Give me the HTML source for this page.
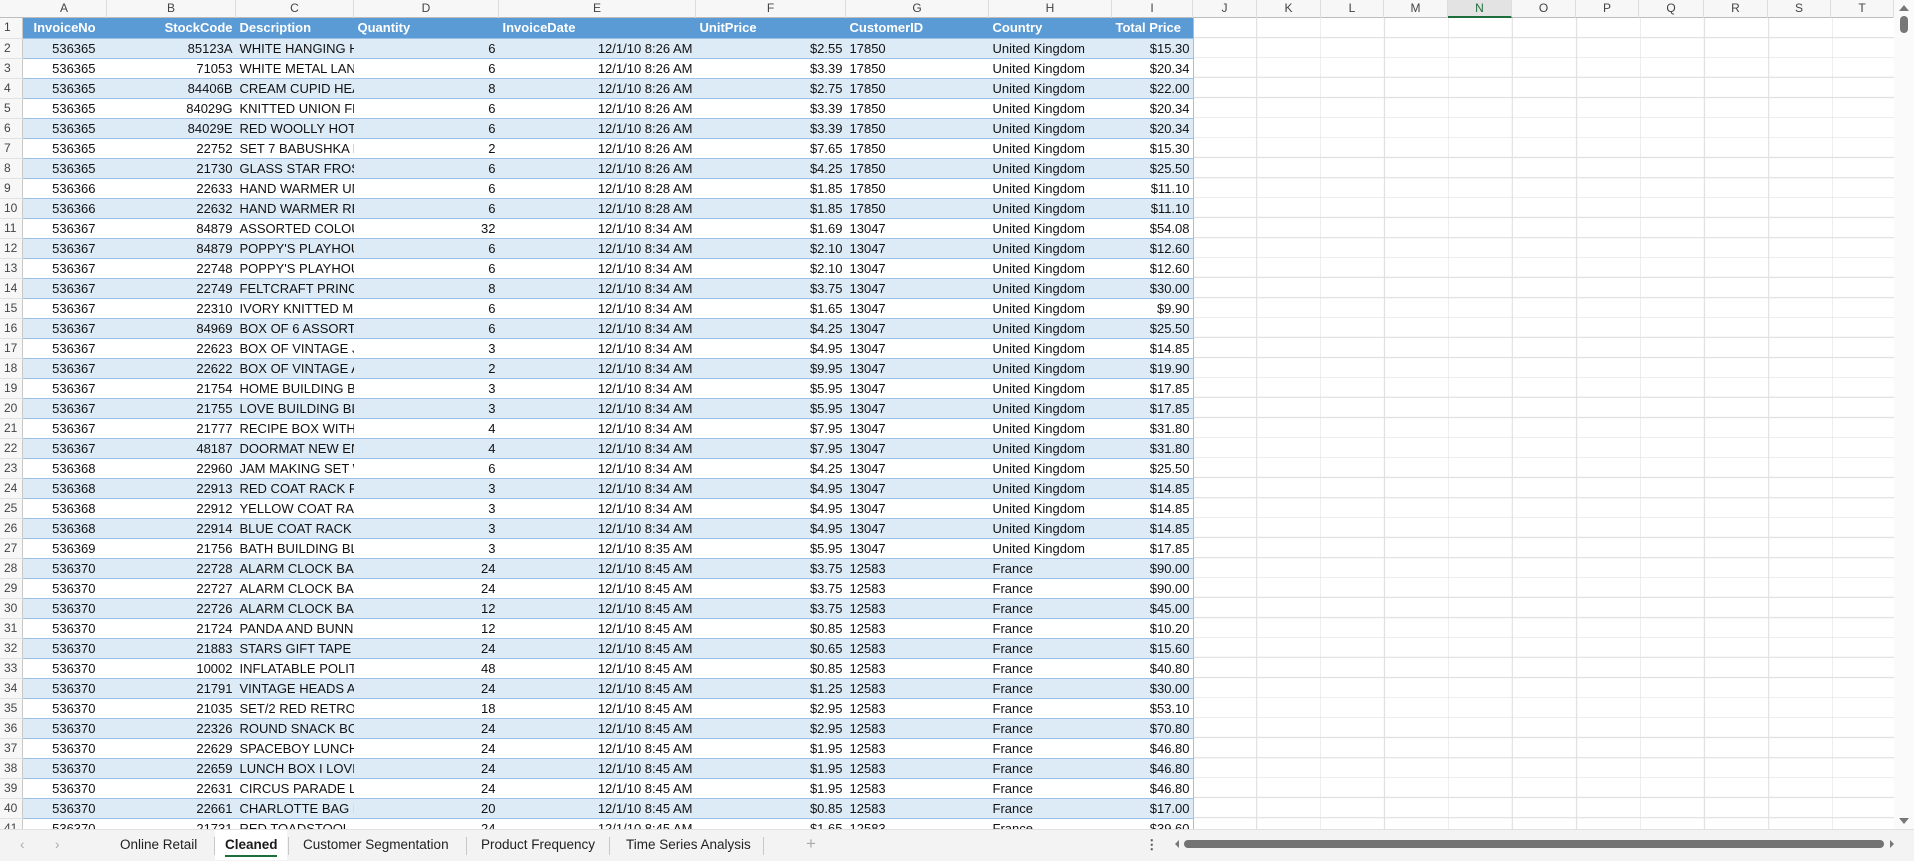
<!DOCTYPE html>
<html><head><meta charset="utf-8">
<style>
*{box-sizing:border-box;margin:0;padding:0}
body{width:1914px;height:861px;overflow:hidden;background:#fff;font-family:"Liberation Sans",Arial,sans-serif;font-size:13px;color:#111;position:relative}
#grid{position:absolute;left:0;top:0;width:1894px;height:829px;overflow:hidden;
background-image:repeating-linear-gradient(to bottom,transparent 0 19px,#e1e1e1 19px 20px),
repeating-linear-gradient(to right,transparent 0 63px,#e1e1e1 63px 64px);background-position:0 18px,1193px 0}
#colhdr{position:absolute;left:0;top:0;height:18px;width:1894px;background:#f7f7f7;border-bottom:1px solid #bdbdbd}
#colhdr div{position:absolute;top:0;height:18px;line-height:17px;text-align:center;color:#444;font-size:12px;border-right:1px solid #ddd}
table{position:absolute;left:0;top:18px;border-collapse:collapse;table-layout:fixed;width:1193px}
td{height:20px;padding:0 3px;white-space:nowrap;overflow:hidden;background:#fff;border-bottom:1px solid #9bc2e6;border-right:1px solid #fff;line-height:19px;font-size:13px}
td.r{text-align:right}td.c{text-align:right;padding-right:11px}
td.n{background:#f7f7f7;color:#444;text-align:left;padding-left:4px;border-bottom:1px solid #e1e1e1;border-right:1px solid #c8c8c8;font-size:12px}
tr.h td{background:#5b9bd5;color:#fff;font-weight:bold;border-right-color:#5b9bd5}
tr.h td.n{background:#f7f7f7;color:#444;font-weight:normal;border-right-color:#c8c8c8}
tr.b td{background:#ddebf7;border-right-color:#ddebf7}
tr.b td.n{background:#f7f7f7;border-right-color:#c8c8c8}
td.g{border-right:1px solid #e4e4e4!important}
td.last{border-right:1px solid #9bc2e6!important}
#vs{position:absolute;left:1894px;top:0;width:20px;height:829px;background:#fafafa}
#tabs{position:absolute;left:0;top:829px;width:1914px;height:32px;background:#f3f3f3;border-top:1px solid #e0e0e0;font-size:13.5px;color:#222}
#tabs span{position:absolute;top:7px}
.sep{position:absolute;top:7px;width:1px;height:18px;background:#c8c8c8}
</style></head><body>
<div id="grid"></div>
<div id="colhdr">
<div style="left:22px;width:85px">A</div><div style="left:107px;width:129px">B</div><div style="left:236px;width:118px">C</div><div style="left:354px;width:145px">D</div><div style="left:499px;width:197px">E</div><div style="left:696px;width:150px">F</div><div style="left:846px;width:143px">G</div><div style="left:989px;width:123px">H</div><div style="left:1112px;width:81px">I</div><div style="left:1193px;width:64px">J</div><div style="left:1257px;width:64px">K</div><div style="left:1321px;width:63px">L</div><div style="left:1384px;width:64px">M</div><div style="left:1448px;width:64px;background:#e3e3e3;color:#1e6e3c;border-bottom:2px solid #1e6e3c">N</div><div style="left:1512px;width:64px">O</div><div style="left:1576px;width:63px">P</div><div style="left:1639px;width:65px">Q</div><div style="left:1704px;width:64px">R</div><div style="left:1768px;width:63px">S</div><div style="left:1831px;width:63px">T</div>
</div>
<table>
<colgroup><col style="width:22px"><col style="width:85px"><col style="width:129px"><col style="width:118px"><col style="width:145px"><col style="width:197px"><col style="width:150px"><col style="width:143px"><col style="width:123px"><col style="width:81px"></colgroup>
<tr class="h"><td class="n">1</td><td style="padding-left:11px">InvoiceNo</td><td class="r">StockCode</td><td>Description</td><td>Quantity</td><td>InvoiceDate</td><td>UnitPrice</td><td>CustomerID</td><td>Country</td><td class="last">Total Price</td></tr>
<tr class="b"><td class="n">2</td><td class="c">536365</td><td class="r">85123A</td><td>WHITE HANGING HEART</td><td class="r">6</td><td class="r">12/1/10 8:26 AM</td><td class="r">$2.55</td><td>17850</td><td>United Kingdom</td><td class="r last">$15.30</td></tr>
<tr><td class="n">3</td><td class="c">536365</td><td class="r">71053</td><td>WHITE METAL LANTERN</td><td class="r">6</td><td class="r">12/1/10 8:26 AM</td><td class="r">$3.39</td><td>17850</td><td>United Kingdom</td><td class="r last">$20.34</td></tr>
<tr class="b"><td class="n">4</td><td class="c">536365</td><td class="r">84406B</td><td>CREAM CUPID HEARTS</td><td class="r">8</td><td class="r">12/1/10 8:26 AM</td><td class="r">$2.75</td><td>17850</td><td>United Kingdom</td><td class="r last">$22.00</td></tr>
<tr><td class="n">5</td><td class="c">536365</td><td class="r">84029G</td><td>KNITTED UNION FLAG</td><td class="r">6</td><td class="r">12/1/10 8:26 AM</td><td class="r">$3.39</td><td>17850</td><td>United Kingdom</td><td class="r last">$20.34</td></tr>
<tr class="b"><td class="n">6</td><td class="c">536365</td><td class="r">84029E</td><td>RED WOOLLY HOTTIE</td><td class="r">6</td><td class="r">12/1/10 8:26 AM</td><td class="r">$3.39</td><td>17850</td><td>United Kingdom</td><td class="r last">$20.34</td></tr>
<tr><td class="n">7</td><td class="c">536365</td><td class="r">22752</td><td>SET 7 BABUSHKA NESTING</td><td class="r">2</td><td class="r">12/1/10 8:26 AM</td><td class="r">$7.65</td><td>17850</td><td>United Kingdom</td><td class="r last">$15.30</td></tr>
<tr class="b"><td class="n">8</td><td class="c">536365</td><td class="r">21730</td><td>GLASS STAR FROSTED</td><td class="r">6</td><td class="r">12/1/10 8:26 AM</td><td class="r">$4.25</td><td>17850</td><td>United Kingdom</td><td class="r last">$25.50</td></tr>
<tr><td class="n">9</td><td class="c">536366</td><td class="r">22633</td><td>HAND WARMER UNION</td><td class="r">6</td><td class="r">12/1/10 8:28 AM</td><td class="r">$1.85</td><td>17850</td><td>United Kingdom</td><td class="r last">$11.10</td></tr>
<tr class="b"><td class="n">10</td><td class="c">536366</td><td class="r">22632</td><td>HAND WARMER RED</td><td class="r">6</td><td class="r">12/1/10 8:28 AM</td><td class="r">$1.85</td><td>17850</td><td>United Kingdom</td><td class="r last">$11.10</td></tr>
<tr><td class="n">11</td><td class="c">536367</td><td class="r">84879</td><td>ASSORTED COLOUR BIRD</td><td class="r">32</td><td class="r">12/1/10 8:34 AM</td><td class="r">$1.69</td><td>13047</td><td>United Kingdom</td><td class="r last">$54.08</td></tr>
<tr class="b"><td class="n">12</td><td class="c">536367</td><td class="r">84879</td><td>POPPY'S PLAYHOUSE</td><td class="r">6</td><td class="r">12/1/10 8:34 AM</td><td class="r">$2.10</td><td>13047</td><td>United Kingdom</td><td class="r last">$12.60</td></tr>
<tr><td class="n">13</td><td class="c">536367</td><td class="r">22748</td><td>POPPY'S PLAYHOUSE</td><td class="r">6</td><td class="r">12/1/10 8:34 AM</td><td class="r">$2.10</td><td>13047</td><td>United Kingdom</td><td class="r last">$12.60</td></tr>
<tr class="b"><td class="n">14</td><td class="c">536367</td><td class="r">22749</td><td>FELTCRAFT PRINCESS</td><td class="r">8</td><td class="r">12/1/10 8:34 AM</td><td class="r">$3.75</td><td>13047</td><td>United Kingdom</td><td class="r last">$30.00</td></tr>
<tr><td class="n">15</td><td class="c">536367</td><td class="r">22310</td><td>IVORY KNITTED MUG</td><td class="r">6</td><td class="r">12/1/10 8:34 AM</td><td class="r">$1.65</td><td>13047</td><td>United Kingdom</td><td class="r last">$9.90</td></tr>
<tr class="b"><td class="n">16</td><td class="c">536367</td><td class="r">84969</td><td>BOX OF 6 ASSORTED</td><td class="r">6</td><td class="r">12/1/10 8:34 AM</td><td class="r">$4.25</td><td>13047</td><td>United Kingdom</td><td class="r last">$25.50</td></tr>
<tr><td class="n">17</td><td class="c">536367</td><td class="r">22623</td><td>BOX OF VINTAGE JIGSAW</td><td class="r">3</td><td class="r">12/1/10 8:34 AM</td><td class="r">$4.95</td><td>13047</td><td>United Kingdom</td><td class="r last">$14.85</td></tr>
<tr class="b"><td class="n">18</td><td class="c">536367</td><td class="r">22622</td><td>BOX OF VINTAGE ALPHABET</td><td class="r">2</td><td class="r">12/1/10 8:34 AM</td><td class="r">$9.95</td><td>13047</td><td>United Kingdom</td><td class="r last">$19.90</td></tr>
<tr><td class="n">19</td><td class="c">536367</td><td class="r">21754</td><td>HOME BUILDING BLOCK</td><td class="r">3</td><td class="r">12/1/10 8:34 AM</td><td class="r">$5.95</td><td>13047</td><td>United Kingdom</td><td class="r last">$17.85</td></tr>
<tr class="b"><td class="n">20</td><td class="c">536367</td><td class="r">21755</td><td>LOVE BUILDING BLOCK</td><td class="r">3</td><td class="r">12/1/10 8:34 AM</td><td class="r">$5.95</td><td>13047</td><td>United Kingdom</td><td class="r last">$17.85</td></tr>
<tr><td class="n">21</td><td class="c">536367</td><td class="r">21777</td><td>RECIPE BOX WITH METAL</td><td class="r">4</td><td class="r">12/1/10 8:34 AM</td><td class="r">$7.95</td><td>13047</td><td>United Kingdom</td><td class="r last">$31.80</td></tr>
<tr class="b"><td class="n">22</td><td class="c">536367</td><td class="r">48187</td><td>DOORMAT NEW ENGLAND</td><td class="r">4</td><td class="r">12/1/10 8:34 AM</td><td class="r">$7.95</td><td>13047</td><td>United Kingdom</td><td class="r last">$31.80</td></tr>
<tr><td class="n">23</td><td class="c">536368</td><td class="r">22960</td><td>JAM MAKING SET WITH</td><td class="r">6</td><td class="r">12/1/10 8:34 AM</td><td class="r">$4.25</td><td>13047</td><td>United Kingdom</td><td class="r last">$25.50</td></tr>
<tr class="b"><td class="n">24</td><td class="c">536368</td><td class="r">22913</td><td>RED COAT RACK PARIS</td><td class="r">3</td><td class="r">12/1/10 8:34 AM</td><td class="r">$4.95</td><td>13047</td><td>United Kingdom</td><td class="r last">$14.85</td></tr>
<tr><td class="n">25</td><td class="c">536368</td><td class="r">22912</td><td>YELLOW COAT RACK</td><td class="r">3</td><td class="r">12/1/10 8:34 AM</td><td class="r">$4.95</td><td>13047</td><td>United Kingdom</td><td class="r last">$14.85</td></tr>
<tr class="b"><td class="n">26</td><td class="c">536368</td><td class="r">22914</td><td>BLUE COAT RACK PARIS</td><td class="r">3</td><td class="r">12/1/10 8:34 AM</td><td class="r">$4.95</td><td>13047</td><td>United Kingdom</td><td class="r last">$14.85</td></tr>
<tr><td class="n">27</td><td class="c">536369</td><td class="r">21756</td><td>BATH BUILDING BLOCK</td><td class="r">3</td><td class="r">12/1/10 8:35 AM</td><td class="r">$5.95</td><td>13047</td><td>United Kingdom</td><td class="r last">$17.85</td></tr>
<tr class="b"><td class="n">28</td><td class="c">536370</td><td class="r">22728</td><td>ALARM CLOCK BAKELIKE</td><td class="r">24</td><td class="r">12/1/10 8:45 AM</td><td class="r">$3.75</td><td>12583</td><td>France</td><td class="r last">$90.00</td></tr>
<tr><td class="n">29</td><td class="c">536370</td><td class="r">22727</td><td>ALARM CLOCK BAKELIKE</td><td class="r">24</td><td class="r">12/1/10 8:45 AM</td><td class="r">$3.75</td><td>12583</td><td>France</td><td class="r last">$90.00</td></tr>
<tr class="b"><td class="n">30</td><td class="c">536370</td><td class="r">22726</td><td>ALARM CLOCK BAKELIKE</td><td class="r">12</td><td class="r">12/1/10 8:45 AM</td><td class="r">$3.75</td><td>12583</td><td>France</td><td class="r last">$45.00</td></tr>
<tr><td class="n">31</td><td class="c">536370</td><td class="r">21724</td><td>PANDA AND BUNNIES</td><td class="r">12</td><td class="r">12/1/10 8:45 AM</td><td class="r">$0.85</td><td>12583</td><td>France</td><td class="r last">$10.20</td></tr>
<tr class="b"><td class="n">32</td><td class="c">536370</td><td class="r">21883</td><td>STARS GIFT TAPE</td><td class="r">24</td><td class="r">12/1/10 8:45 AM</td><td class="r">$0.65</td><td>12583</td><td>France</td><td class="r last">$15.60</td></tr>
<tr><td class="n">33</td><td class="c">536370</td><td class="r">10002</td><td>INFLATABLE POLITICAL</td><td class="r">48</td><td class="r">12/1/10 8:45 AM</td><td class="r">$0.85</td><td>12583</td><td>France</td><td class="r last">$40.80</td></tr>
<tr class="b"><td class="n">34</td><td class="c">536370</td><td class="r">21791</td><td>VINTAGE HEADS AND</td><td class="r">24</td><td class="r">12/1/10 8:45 AM</td><td class="r">$1.25</td><td>12583</td><td>France</td><td class="r last">$30.00</td></tr>
<tr><td class="n">35</td><td class="c">536370</td><td class="r">21035</td><td>SET/2 RED RETROSPOT</td><td class="r">18</td><td class="r">12/1/10 8:45 AM</td><td class="r">$2.95</td><td>12583</td><td>France</td><td class="r last">$53.10</td></tr>
<tr class="b"><td class="n">36</td><td class="c">536370</td><td class="r">22326</td><td>ROUND SNACK BOXES</td><td class="r">24</td><td class="r">12/1/10 8:45 AM</td><td class="r">$2.95</td><td>12583</td><td>France</td><td class="r last">$70.80</td></tr>
<tr><td class="n">37</td><td class="c">536370</td><td class="r">22629</td><td>SPACEBOY LUNCH BOX</td><td class="r">24</td><td class="r">12/1/10 8:45 AM</td><td class="r">$1.95</td><td>12583</td><td>France</td><td class="r last">$46.80</td></tr>
<tr class="b"><td class="n">38</td><td class="c">536370</td><td class="r">22659</td><td>LUNCH BOX I LOVE</td><td class="r">24</td><td class="r">12/1/10 8:45 AM</td><td class="r">$1.95</td><td>12583</td><td>France</td><td class="r last">$46.80</td></tr>
<tr><td class="n">39</td><td class="c">536370</td><td class="r">22631</td><td>CIRCUS PARADE LUNCH</td><td class="r">24</td><td class="r">12/1/10 8:45 AM</td><td class="r">$1.95</td><td>12583</td><td>France</td><td class="r last">$46.80</td></tr>
<tr class="b"><td class="n">40</td><td class="c">536370</td><td class="r">22661</td><td>CHARLOTTE BAG DOLLY</td><td class="r">20</td><td class="r">12/1/10 8:45 AM</td><td class="r">$0.85</td><td>12583</td><td>France</td><td class="r last">$17.00</td></tr>
<tr><td class="n">41</td><td class="c">536370</td><td class="r">21731</td><td>RED TOADSTOOL LED</td><td class="r">24</td><td class="r">12/1/10 8:45 AM</td><td class="r">$1.65</td><td>12583</td><td>France</td><td class="r last">$39.60</td></tr>
</table>
<div id="vs">
<svg width="20" height="829" style="position:absolute;left:0;top:0">
<path d="M5 11 L10 5 L15 11 Z" fill="#777"/>
<rect x="6" y="16" width="8" height="17" rx="4" fill="#777"/>
<path d="M5 818 L10 824 L15 818 Z" fill="#777"/>
</svg>
</div>
<div id="tabs">
<span style="left:20px;color:#aaa">&lsaquo;</span><span style="left:55px;color:#aaa">&rsaquo;</span>
<span style="left:120px">Online Retail</span>
<div class="sep" style="left:214px"></div>
<div style="position:absolute;left:215px;top:0;width:72px;height:30px;background:#fff"></div>
<span style="left:225px;font-weight:bold;color:#1a1a1a">Cleaned</span>
<div style="position:absolute;left:225px;top:25px;width:52px;height:2px;background:#1e6e3c"></div>
<div class="sep" style="left:288px"></div>
<span style="left:303px">Customer Segmentation</span>
<div class="sep" style="left:466px"></div>
<span style="left:481px">Product Frequency</span>
<div class="sep" style="left:609px"></div>
<span style="left:626px">Time Series Analysis</span>
<div class="sep" style="left:763px"></div>
<span style="left:806px;color:#aaa;font-size:17px;top:4px">+</span>
<span style="left:1145px;color:#555;font-weight:bold">&#8942;</span>
<svg width="740" height="20" style="position:absolute;left:1168px;top:4px">
<path d="M7 10 L11 6 L11 14 Z" fill="#777"/>
<rect x="16" y="6" width="700" height="8" rx="4" fill="#737373"/>
<path d="M722 6 L726 10 L722 14 Z" fill="#777"/>
</svg>
</div>
</body></html>
